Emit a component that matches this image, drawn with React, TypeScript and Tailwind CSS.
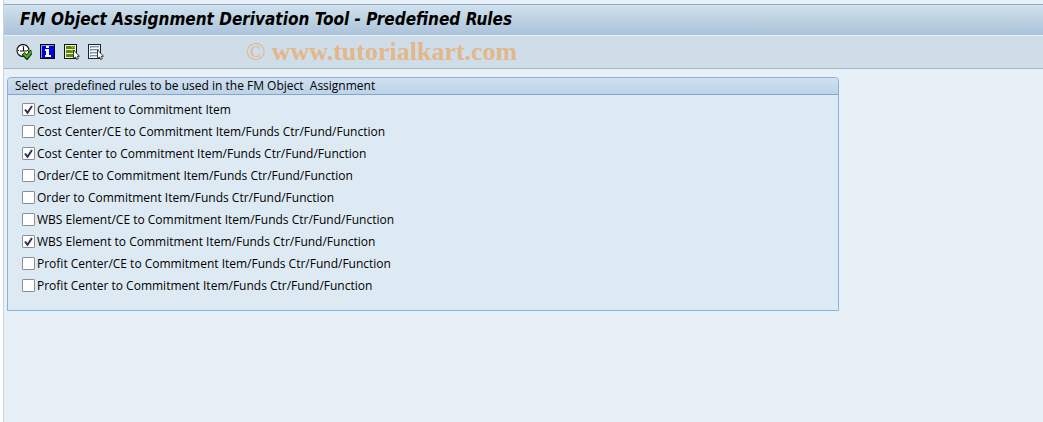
import { useState } from "react";

const initialRules = [
    { id: "ce-ci", label: "Cost Element to Commitment Item", checked: true },
    { id: "cc-ce", label: "Cost Center/CE to Commitment Item/Funds Ctr/Fund/Function", checked: false },
    { id: "cc", label: "Cost Center to Commitment Item/Funds Ctr/Fund/Function", checked: true },
    { id: "order-ce", label: "Order/CE to Commitment Item/Funds Ctr/Fund/Function", checked: false },
    { id: "order", label: "Order to Commitment Item/Funds Ctr/Fund/Function", checked: false },
    { id: "wbs-ce", label: "WBS Element/CE to Commitment Item/Funds Ctr/Fund/Function", checked: false },
    { id: "wbs", label: "WBS Element to Commitment Item/Funds Ctr/Fund/Function", checked: true },
    { id: "pc-ce", label: "Profit Center/CE to Commitment Item/Funds Ctr/Fund/Function", checked: false },
    { id: "pc", label: "Profit Center to Commitment Item/Funds Ctr/Fund/Function", checked: false },
];

function ExecuteIcon() {
    return (
        <svg width="16" height="16" viewBox="0 0 16 16" fill="none">
            <circle cx="7" cy="6.5" r="6" fill="#fff" stroke="#111" strokeWidth="1.1" />
            <path d="M7 1.5v1M2 6.5h1M11 6.5h1M7 10.5v1" stroke="#111" />
            <path d="M7.5 2.5v5M4 7h7" stroke="#111" strokeWidth="1.1" />
            <path d="M7 9.5l4 4 5-6.5" stroke="#16300a" strokeWidth="4" />
            <path d="M7.6 9.9l3.4 3.1 4.4-5.6" stroke="#4fae22" strokeWidth="2.2" />
        </svg>
    );
}

function InfoIcon() {
    return (
        <svg width="16" height="16" viewBox="0 0 16 16" shapeRendering="crispEdges">
            <path d="M0 0h15v15H0z" fill="#000" />
            <path d="M1 1h13v13H1z" fill="#7fa0f0" />
            <path d="M2 2h12v12H2z" fill="#0000e0" />
            <path d="M6 2h3v2H6zM5 5h4v6h2v2H5v-2h1V7H5z" fill="#fff" />
        </svg>
    );
}

function Pointer() {
    return <path d="M9.5 6v8.5l2-1.5 1.2 2.5 1.6-.8-1.1-2.4h2.3z" fill="#fff" stroke="#111" strokeWidth="0.8" />;
}

function SelectAllIcon() {
    return (
        <svg width="16" height="16" viewBox="0 0 16 16">
            <g shapeRendering="crispEdges">
                <path d="M0 0h13v15H0z" fill="#111" />
                <path d="M1 1h11v13H1z" fill="#eef3d8" />
                <path d="M2 2h9v3H2zM2 6h9v3H2zM2 10h9v3H2z" fill="#5c8a00" />
                <path d="M7 2h1v1H7zM9 2h1v1H9zM8 3h1v1H8zM10 3h1v1h-1zM7 6h1v1H7zM9 6h1v1H9zM8 7h1v1H8z" fill="#a4c45a" />
            </g>
            <Pointer />
        </svg>
    );
}

function DeselectAllIcon() {
    return (
        <svg width="16" height="16" viewBox="0 0 16 16">
            <g shapeRendering="crispEdges">
                <path d="M0 0h13v15H0z" fill="#222" />
                <path d="M1 1h11v13H1z" fill="#f4f8fb" />
                <path d="M2 2h9v2H2zM2 5h9v2H2zM2 8h9v2H2zM2 11h9v2H2z" fill="#7895a8" />
                <path d="M3 3h8v1H3zM3 6h8v1H3zM3 9h8v1H3zM3 12h8v1H3z" fill="#c3d6e2" />
            </g>
            <Pointer />
        </svg>
    );
}

export default function App() {
    const [rules, setRules] = useState(initialRules);

    const setAll = (checked: boolean) => setRules(rules.map((r) => ({ ...r, checked })));
    const toggle = (id: string) => setRules(rules.map((r) => (r.id === id ? { ...r, checked: !r.checked } : r)));

    return (
        <div className="min-h-screen bg-white pl-[3px] font-['Open_Sans','Noto_Sans',sans-serif] text-xs text-black">
            <div className="min-h-screen border-l border-[#c9d6e2] bg-[#e7eff7] pt-1">
                <header className="flex h-8 items-center border-t border-b border-t-[#8fa8c4] border-b-[#e9f2f8] bg-linear-to-b from-[#d2e2ee] via-[#bdd1e0] to-[#abc3dd] px-4">
                    <h1 className="pb-0.5 font-['DejaVu_Sans_Condensed',sans-serif] text-[17px] leading-6 font-bold italic">FM Object Assignment Derivation Tool - Predefined Rules</h1>
                </header>

                <div className="flex h-[33px] items-center gap-2 border-b border-[#a3b7cd] bg-[#cfdde8] px-3">
                    <button type="button" aria-label="Execute" className="cursor-pointer"><ExecuteIcon /></button>
                    <button type="button" aria-label="Information" className="cursor-pointer"><InfoIcon /></button>
                    <button type="button" aria-label="Select all" onClick={() => setAll(true)} className="cursor-pointer"><SelectAllIcon /></button>
                    <button type="button" aria-label="Deselect all" onClick={() => setAll(false)} className="cursor-pointer"><DeselectAllIcon /></button>
                    <p className="ml-[134px] flex gap-1.5 font-['Liberation_Serif',serif] text-[26px] leading-8 text-[#e3b78a]">
                        <span>©</span>
                        <span className="font-bold">www.tutorialkart.com</span>
                    </p>
                </div>

                <main className="pt-2 pl-[3px]">
                    <fieldset className="w-full max-w-[832px] rounded-t-sm border border-[#8bb1d6] bg-[#deeaf3]">
                        <h2 className="h-[17px] rounded-t-sm border-b border-[#86a5c9] bg-linear-to-b from-[#d0e0ef] to-[#bdd3e8] px-[7px] leading-4 whitespace-pre">Select  predefined rules to be used in the FM Object  Assignment</h2>
                        <div className="flex flex-col px-3.5 pt-[3px] pb-3.5">
                            {rules.map((rule) => (
                                <label key={rule.id} className="flex h-[22px] items-center gap-0.5 leading-[18px]">
                                    <span className="relative flex">
                                        <input
                                            type="checkbox"
                                            checked={rule.checked}
                                            onChange={() => toggle(rule.id)}
                                            className="peer size-[13px] appearance-none rounded-[1px] border border-[#8c8f94] bg-white"
                                        />
                                        <svg viewBox="0 0 13 13" className="pointer-events-none absolute inset-0 hidden size-[13px] peer-checked:block" fill="none">
                                            <path d="M3 6.5l2.5 3.2L10 3" stroke="#2d3050" strokeWidth="2" />
                                        </svg>
                                    </span>
                                    <span className="pt-px">{rule.label}</span>
                                </label>
                            ))}
                        </div>
                    </fieldset>
                </main>
            </div>
        </div>
    );
}
